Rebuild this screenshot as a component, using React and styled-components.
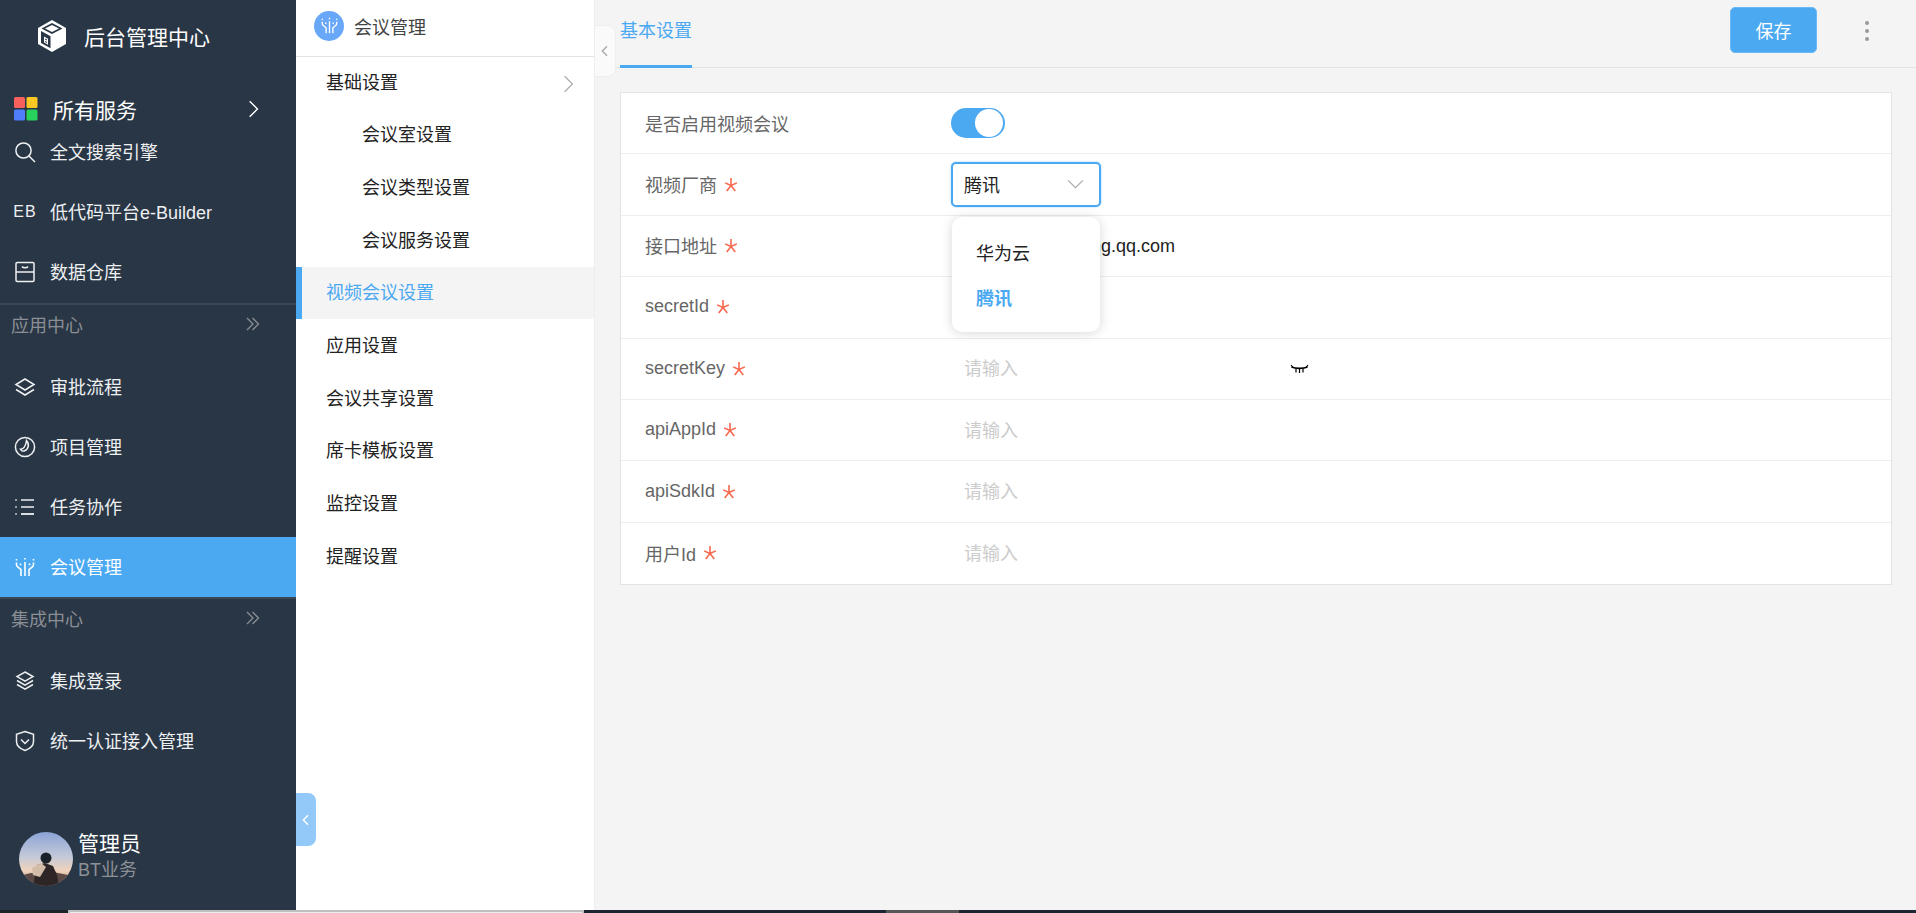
import React from "react";
import styled, { createGlobalStyle } from "styled-components";

const FONT = `"Liberation Sans", "Noto Sans CJK SC", sans-serif`;
const BLUE = "#4ba9f2";
const DARK = "#293645";

const Global = createGlobalStyle`
  html, body { margin: 0; padding: 0; height: 100%; overflow: hidden; }
  body { font-family: ${FONT}; font-size: 18px; }
  #root { height: 100%; }
  * { box-sizing: border-box; }
`;

const Page = styled.div`display:flex;flex-direction:column;height:100vh;`;
const Body = styled.div`display:flex;flex:1;min-height:0;`;
const Strip = styled.div`display:flex;height:3px;flex:none;background:#1d2530;`;
const StripPart = styled.div`
  width:${p => p.$w}px;
  flex:${p => (p.$w ? "none" : 1)};
  background:${p => p.$c};
`;
const Thumb = styled.div`
  width:516px;flex:none;background:linear-gradient(#bfbfbf 2px,#ececec 2px);
  border-left:2px solid #bfbfbf;border-right:2px solid #bfbfbf;
`;

const Sidebar = styled.aside`
  width:296px;flex:none;background:${DARK};color:#fff;display:flex;flex-direction:column;
`;
const Brand = styled.div`
  height:72px;display:flex;align-items:center;padding-left:37px;gap:17px;font-size:21px;
`;
const AllServices = styled.div`
  height:50px;margin-top:12px;padding:0 33px 0 14px;display:flex;align-items:center;font-size:21px;
  span{margin-left:15px;flex:1;}
`;
const Row = styled.div`
  height:60px;display:flex;align-items:center;padding:0 0 2px 13px;gap:13px;font-size:18px;
  color:${p => (p.$active ? "#fff" : "#eef0f2")};
  background:${p => (p.$active ? BLUE : "transparent")};
`;
const RowIcon = styled.span`
  width:24px;height:24px;margin-top:2px;display:flex;align-items:center;justify-content:center;flex:none;
  font-size:16px;letter-spacing:1px;
`;
const Rows = styled.div`margin-top:${p => p.$top || 0}px;`;
const GroupLabel = styled.div`
  height:54px;margin-top:${p => p.$gap}px;border-top:2px solid #3a4654;padding:0 36px 14px 11px;display:flex;align-items:center;
  justify-content:space-between;color:#8b8f95;font-size:18px;
`;
const User = styled.div`margin-top:auto;height:78px;padding-left:19px;display:flex;gap:5px;`;
const Avatar = styled.div`width:54px;height:54px;border-radius:50%;overflow:hidden;flex:none;`;
const UserText = styled.div`display:flex;flex-direction:column;`;
const UserName = styled.div`font-size:21px;line-height:24px;`;
const UserRole = styled.div`font-size:18px;line-height:28px;color:#8c9097;`;

const SubNav = styled.nav`
  position:relative;width:299px;flex:none;background:#fff;border-right:1px solid #eeeeee;
`;
const SubHeader = styled.div`
  height:57px;padding:0 0 5px 18px;border-bottom:1px solid #e4e4e4;display:flex;align-items:center;gap:10px;
  color:#444;font-size:18px;
`;
const SubBadge = styled.span`
  width:30px;height:30px;border-radius:50%;background:#69a7f8;display:flex;align-items:center;justify-content:center;color:#fff;
`;
const SubList = styled.div`margin-top:-1px;`;
const SubItem = styled.div`
  height:52.67px;display:flex;align-items:center;justify-content:space-between;font-size:18px;padding-bottom:3px;
  border-left:6px solid ${p => (p.$active ? BLUE : "transparent")};
  padding-left:${p => (p.$child ? 60 : 24)}px;padding-right:16px;
  background:${p => (p.$active ? "#f4f4f4" : "transparent")};
  color:${p => (p.$active ? BLUE : "#222")};
  svg{margin-top:6px;}
`;
const FoldTab = styled.div`
  position:absolute;left:0;top:793px;width:20px;height:53px;background:#92c9f9;color:#fff;border-radius:0 8px 8px 0;
  display:flex;align-items:center;justify-content:center;
`;

const Main = styled.main`position:relative;flex:1;min-width:0;background:#f4f4f4;`;
const CollapseTab = styled.div`
  position:absolute;left:0;top:25px;width:21px;height:52px;background:#fafafa;border:1px solid #eeeeee;border-left:none;
  border-radius:0 8px 8px 0;display:flex;align-items:center;justify-content:center;color:#aaa;
`;
const TopBar = styled.div`
  height:68px;border-bottom:1px solid #e4e4e4;padding:0 47px 0 25px;display:flex;align-items:flex-start;
`;
const Tab = styled.div`
  width:72px;height:68px;border-bottom:3px solid ${BLUE};color:${BLUE};font-size:18px;white-space:nowrap;
  line-height:62px;
`;
const SaveButton = styled.button`
  margin:7px 48px 0 auto;width:87px;height:46px;border:1px solid #6cb8f4;border-radius:5px;background:${BLUE};
  color:#fff;font:18px ${FONT};padding:0;
`;
const Dots = styled.div`
  margin-top:21px;display:flex;flex-direction:column;gap:4px;
  i{display:block;width:4px;height:4px;border-radius:50%;background:#999;}
`;
const Card = styled.section`
  margin:24px 24px 0 25px;background:#fff;border:1px solid #e4e4e4;
`;
const FormRow = styled.div`
  height:61.4px;display:flex;align-items:center;border-bottom:1px solid #eeeeee;
  &:last-child{border-bottom:none;}
`;
const Label = styled.label`
  width:330px;flex:none;padding:0 0 1px 24px;color:#666;font-size:18px;display:flex;align-items:center;gap:7px;
`;
const Field = styled.div`position:relative;display:flex;align-items:center;width:156px;padding:2px 0 0 13px;`;
const TextInput = styled.input`
  width:${p => p.$w || 260}px;border:none;outline:none;background:transparent;padding:0;flex:none;
  font:18px ${FONT};color:#222;
  &::placeholder{color:#cccccc;opacity:1;}
`;
const EyeSlot = styled.span`position:absolute;left:339px;top:50%;margin-top:-5px;display:flex;color:#000;`;
const Switch = styled.span`
  width:54px;height:30px;margin-bottom:1px;border-radius:15px;background:${BLUE};display:flex;align-items:center;justify-content:flex-end;padding-right:2px;
  &::after{content:"";width:28px;height:28px;border-radius:50%;background:#fff;}
`;
const SelectWrap = styled.div`position:relative;width:150px;`;
const SelectBox = styled.div`
  height:45px;border:2px solid ${BLUE};box-shadow:0 0 2px #8cc8f7;border-radius:5px;padding:0 14px 2px 11px;background:#fff;
  display:flex;align-items:center;justify-content:space-between;color:#222;font-size:18px;
`;
const Menu = styled.div`
  position:absolute;z-index:5;left:1px;top:55px;width:148px;height:115px;background:#fff;border-radius:10px;
  box-shadow:0 1px 12px rgba(0,0,0,.16);padding:12px 0 0 24px;
`;
const MenuItem = styled.div`
  height:45px;display:flex;align-items:center;font-size:18px;
  color:${p => (p.$on ? BLUE : "#222")};font-weight:${p => (p.$on ? 700 : 400)};
`;

const Chevron = ({ size = 16, dir = "right", color = "currentColor", w = 1.4 }) => {
  const d = { right: "M6 2l7 7-7 7", left: "M12 2L5 9l7 7", down: "M2 6l7 7 7-7" }[dir];
  return <svg width={size} height={size} viewBox="0 0 18 18" fill="none" stroke={color} strokeWidth={w * 18 / size}><path d={d} /></svg>;
};
const DoubleChevron = () => (
  <svg width="14" height="14" viewBox="0 0 14 14" fill="none" stroke="#8a8f95" strokeWidth="1.3"><path d="M1 1l6 6-6 6M6.500 1l6 6-6 6" /></svg>
);
const S = ({ children, size = 22, box = 22 }) => (
  <svg width={size} height={size} viewBox={`0 0 ${box} ${box}`} fill="none" stroke="currentColor" strokeWidth="1.5">{children}</svg>
);
const MeetingGlyph = ({ size = 20 }) => (
  <svg width={size} height={size} viewBox="0 0 20 20" fill="none" stroke="currentColor" strokeWidth="1.6">
    <path d="M10 1v1.600M10 5v14" />
    <path d="M1.500 2v1.600M1.500 5.500v2.200c0 1 .5 1.600 1.200 2.200L6 12.600V19" />
    <path d="M18.500 2v1.600M18.500 5.500v2.200c0 1-.5 1.600-1.200 2.200L14 12.600V19" />
    <path d="M5.500 6.500v1.700M14.500 6.500v1.700" />
  </svg>
);
const Icons = {
  search: <S><circle cx="9.500" cy="9.500" r="7.600" /><path d="M15 15l6 6" /></S>,
  eb: <>EB</>,
  store: <S><rect x="2" y="1.500" width="18" height="19" rx="1.200" /><path d="M2 11h18M8 5.500c1 1.600 5 1.600 6 0" /></S>,
  layers: <S><path d="M11 3l9 5.500-9 5.500-9-5.500z" /><path d="M2 13.500l9 5.500 9-5.500" /></S>,
  project: <S><circle cx="11" cy="11" r="9.600" /><path d="M12.500 4.500c3 3 2.500 9-2.500 10.500-1.300.4-3-.5-3.500-1.800 2.800.3 5.400-3 6-8.700z" /></S>,
  list: <S><path d="M7 4h13M7 11h13" strokeWidth="1.300" /><path d="M7 18h13" strokeWidth="1.800" /><path d="M2 3.200v1.600M2 10.200v1.600M2 17.200v1.600" /></S>,
  meeting: <MeetingGlyph />,
  stack: <S><path d="M11 2l8 4.600-8 4.600-8-4.600z" /><path d="M3 10.500l8 4.600 8-4.600M3 14.500l8 4.600 8-4.600" /></S>,
  shield: <S><path d="M11 1.500l8.500 2.700v7.300c0 4.500-4 7.500-8.500 9-4.500-1.500-8.500-4.500-8.500-9V4.200z" /><path d="M7 9.500l4 4 4-4" /></S>,
};

const Logo = () => (
  <svg width="30" height="32" viewBox="0 0 30 32">
    <path d="M15 0l14 8v16l-14 8-14-8V8z" fill="#fff" />
    <path d="M15 3l10.500 5.500L15 14 4.500 8.500z" fill={DARK} />
    <path d="M15 5l7 3.500-7 3.500-7-3.500z" fill="#fff" />
    <path d="M4 11l9.500 5.200v12L4 23z" fill={DARK} />
    <path d="M7 16.500l4 2.200v6l-4-2.200z" fill="#fff" />
    <path d="M8 18.500l2 1.100v.9l-2-1.100zM8 21l2 1.100v.9L8 21.900z" fill={DARK} />
  </svg>
);
const Grid = () => (
  <svg width="24" height="24" viewBox="0 0 24 24">
    <rect width="11" height="11" rx="1.500" fill="#f8605e" />
    <rect x="12.500" width="11" height="11" rx="1.500" fill="#fdc821" />
    <rect y="12.500" width="11" height="11" rx="1.500" fill="#4f7dfb" />
    <rect x="12.500" y="12.500" width="11" height="11" rx="1.500" fill="#27d15c" />
  </svg>
);
const Star = () => (
  <svg width="14" height="15" viewBox="0 0 13 14" fill="none" stroke="#f8694f" strokeWidth="1.500">
    <path d="M6.500 1v7M6.500 8L1 5.500M6.500 8L12 5.500M6.500 8L2.500 13M6.500 8l4 5" />
  </svg>
);
const ClosedEye = () => (
  <svg width="19" height="11" viewBox="0 0 19 11" fill="none" stroke="currentColor" strokeWidth="1.600">
    <path d="M1.500 3c4 1.800 12 1.800 16 0" />
    <path d="M1 1l2 2.500M18 1l-2 2.500M6 4.500v4M9.500 5v4M13 4.500v4" strokeWidth="1.200" />
  </svg>
);
const Photo = () => (
  <svg width="54" height="54" viewBox="0 0 54 54">
    <defs>
      <linearGradient id="sky" x1="0" y1="0" x2="0" y2="1">
        <stop offset="0" stopColor="#8ba3d6" />
        <stop offset=".45" stopColor="#c2c9d8" />
        <stop offset=".72" stopColor="#f0d3bb" />
        <stop offset="1" stopColor="#a27f70" />
      </linearGradient>
      <filter id="soft"><feGaussianBlur stdDeviation=".7" /></filter>
    </defs>
    <rect width="54" height="54" fill="url(#sky)" />
    <g filter="url(#soft)">
      <path d="M0 44l12-3 10 1 12-2 20 4v10H0z" fill="#5b4a45" />
      <circle cx="27" cy="26" r="5.500" fill="#1f2229" />
      <path d="M18 33l8-2 8 3 4 9 2 11H14z" fill="#2e2825" />
      <path d="M13 36l9-5 5 4-6 10-7-2z" fill="#d3bca8" />
    </g>
  </svg>
);

const topItems = [["search", "全文搜索引擎"], ["eb", "低代码平台e-Builder"], ["store", "数据仓库"]];
const apps = [["layers", "审批流程"], ["project", "项目管理"], ["list", "任务协作"], ["meeting", "会议管理", true]];
const integ = [["stack", "集成登录"], ["shield", "统一认证接入管理"]];
const sub = [
  { t: "基础设置", arrow: true }, { t: "会议室设置", child: true }, { t: "会议类型设置", child: true }, { t: "会议服务设置", child: true },
  { t: "视频会议设置", active: true }, { t: "应用设置" }, { t: "会议共享设置" }, { t: "席卡模板设置" }, { t: "监控设置" }, { t: "提醒设置" },
];
const inputs = [
  { label: "secretKey", eye: true }, { label: "apiAppId" }, { label: "apiSdkId" }, { label: "用户Id" },
];

const NavRows = ({ items, offset }) => (
  <Rows $top={offset}>
    {items.map(([icon, text, active]) => (
      <Row key={text} $active={active}><RowIcon>{Icons[icon]}</RowIcon>{text}</Row>
    ))}
  </Rows>
);

export default function App() {
  return (
    <Page>
      <Global />
      <Body>
        <Sidebar>
          <Brand><Logo />后台管理中心</Brand>
          <AllServices><Grid /><span>所有服务</span><Chevron size={20} /></AllServices>
          <NavRows items={topItems} offset={-12} />
          <GroupLabel $gap={1}>应用中心<DoubleChevron /></GroupLabel>
          <NavRows items={apps} />
          <GroupLabel $gap={0}>集成中心<DoubleChevron /></GroupLabel>
          <NavRows items={integ} />
          <User>
            <Avatar><Photo /></Avatar>
            <UserText><UserName>管理员</UserName><UserRole>BT业务</UserRole></UserText>
          </User>
        </Sidebar>
        <SubNav>
          <SubHeader><SubBadge><MeetingGlyph size={17} /></SubBadge>会议管理</SubHeader>
          <SubList>
            {sub.map(i => (
              <SubItem key={i.t} $child={i.child} $active={i.active}>
                {i.t}{i.arrow && <Chevron size={20} color="#aaa" w={1.2} />}
              </SubItem>
            ))}
          </SubList>
          <FoldTab><Chevron size={12} dir="left" /></FoldTab>
        </SubNav>
        <Main>
          <CollapseTab><Chevron size={12} dir="left" /></CollapseTab>
          <TopBar>
            <Tab>基本设置</Tab>
            <SaveButton>保存</SaveButton>
            <Dots><i /><i /><i /></Dots>
          </TopBar>
          <Card>
            <FormRow><Label>是否启用视频会议</Label><Switch /></FormRow>
            <FormRow>
              <Label>视频厂商<Star /></Label>
              <SelectWrap>
                <SelectBox>腾讯<Chevron size={19} dir="down" color="#aaa" w={1.2} /></SelectBox>
                <Menu><MenuItem>华为云</MenuItem><MenuItem $on>腾讯</MenuItem></Menu>
              </SelectWrap>
            </FormRow>
            <FormRow>
              <Label>接口地址<Star /></Label>
              <Field><TextInput readOnly value="https://api.meeting.qq.com" /></Field>
            </FormRow>
            <FormRow>
              <Label>secretId<Star /></Label>
              <Field><TextInput placeholder="请输入" /></Field>
            </FormRow>
            {inputs.map(i => (
              <FormRow key={i.label}>
                <Label>{i.label}<Star /></Label>
                <Field>
                  <TextInput placeholder="请输入" $w={120} />
                  {i.eye && <EyeSlot><ClosedEye /></EyeSlot>}
                </Field>
              </FormRow>
            ))}
          </Card>
        </Main>
      </Body>
      <Strip>
        <StripPart $w={68} $c="#1c2329" />
        <Thumb />
        <StripPart $w={302} $c="#1d2530" />
        <StripPart $w={73} $c="#565656" />
        <StripPart $c="#1d2530" />
      </Strip>
    </Page>
  );
}
